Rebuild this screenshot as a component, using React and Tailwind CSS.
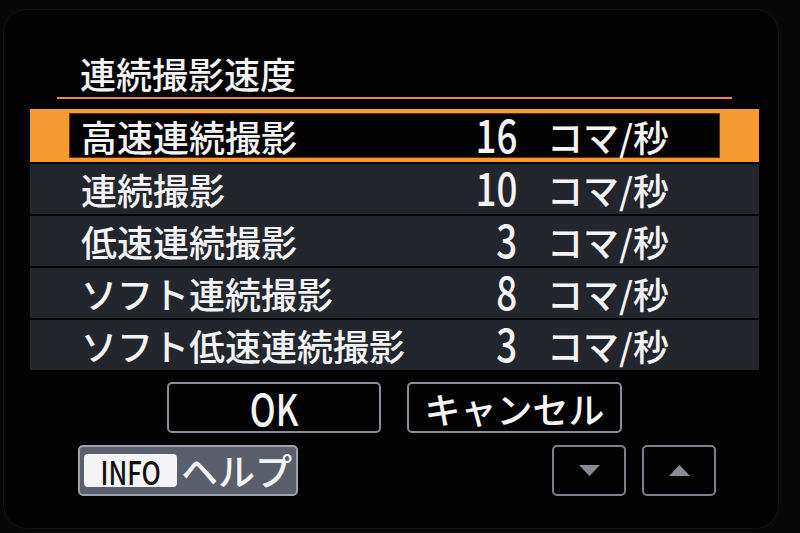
const JP = "font-['Noto_Sans_CJK_JP','Noto_Sans',sans-serif]";

const rows = [
  { label: "高速連続撮影", fps: "16" },
  { label: "連続撮影", fps: "10" },
  { label: "低速連続撮影", fps: "3" },
  { label: "ソフト連続撮影", fps: "8" },
  { label: "ソフト低速連続撮影", fps: "3" },
];

function RowContent({ label, fps, lead }) {
  return (
    <div className="flex items-center h-full text-[#f4f4f6] font-medium">
      <div className={lead} />
      <div className="w-[349px] shrink-0 text-[36px] leading-[36px] whitespace-nowrap">{label}</div>
      <div className="w-[87px] shrink-0 flex justify-end">
        <span className="inline-block text-[46px] leading-[44px] scale-x-[0.8] origin-right -translate-y-[3px]">{fps}</span>
      </div>
      <div className="ml-[30px] text-[36px] leading-[36px] whitespace-nowrap">コマ/秒</div>
    </div>
  );
}

function Triangle({ up }) {
  return (
    <svg width="21" height="11" viewBox="0 0 21 11">
      <path d={up ? "M10.5 0 L21 11 L0 11 Z" : "M0 0 L21 0 L10.5 11 Z"} fill="#878b96" />
    </svg>
  );
}

export default function App() {
  return (
    <div className={`w-[800px] h-[533px] bg-[#070708] overflow-hidden ${JP}`}>
      <div className="ml-[3px] mt-[9px] w-[776px] h-[520px] rounded-[24px] bg-[#030304] border border-[#141417] flex flex-col">
        {/* title */}
        <div className="mt-[45px] pl-[76px] text-[36px] leading-[37px] text-[#f4f4f6] font-medium">連続撮影速度</div>
        <div className="mt-[5px] ml-[53px] w-[675px] h-[2px] bg-[#f0892a]" />

        {/* list */}
        <div className="mt-[10px] ml-[26px] w-[729px] flex flex-col gap-[2px]">
          {rows.map((r, i) =>
            i === 0 ? (
              <div key={i} className="h-[53px] bg-[#f59b31] px-[39px] py-[4px]">
                <div className="h-full bg-[#020202] border border-[#6a2c0c]">
                  <RowContent label={r.label} fps={r.fps} lead="w-[11px] shrink-0" />
                </div>
              </div>
            ) : (
              <div key={i} className="h-[50px] bg-[#24262d]">
                <RowContent label={r.label} fps={r.fps} lead="w-[51px] shrink-0" />
              </div>
            )
          )}
        </div>

        {/* OK / cancel */}
        <div className="mt-[12px] ml-[163px] flex gap-[26px]">
          <div className="w-[214px] h-[51px] rounded-[5px] border-2 border-[#8a8e98] flex items-center justify-center">
            <span className="inline-block text-[44px] leading-[40px] text-[#f4f4f6] font-medium scale-x-[0.78] -translate-y-[1px]">OK</span>
          </div>
          <div className="w-[215px] h-[51px] rounded-[5px] border-2 border-[#8a8e98] flex items-center justify-center text-[36px] leading-[36px] text-[#f4f4f6] font-medium">
            キャンセル
          </div>
        </div>

        {/* help and page arrows */}
        <div className="mt-[12px] ml-[74px] flex items-center">
          <div className="w-[220px] h-[51px] rounded-[5px] border-2 border-[#9ea2ab] bg-[#5b5f6b] flex items-center pl-[4px]">
            <div className="w-[93px] h-[33px] rounded-[4px] bg-[#f4f4f6] flex items-center justify-center">
              <span className="inline-block text-[32px] leading-[30px] text-[#111] font-medium scale-x-[0.8]">INFO</span>
            </div>
            <span className="ml-[4px] text-[37px] leading-[37px] text-[#f4f4f6] font-medium">ヘルプ</span>
          </div>
          <div className="ml-[254px] w-[74px] h-[51px] rounded-[5px] border-2 border-[#7c808a] flex items-center justify-center">
            <Triangle />
          </div>
          <div className="ml-[16px] w-[74px] h-[51px] rounded-[5px] border-2 border-[#7c808a] flex items-center justify-center">
            <Triangle up />
          </div>
        </div>
      </div>
    </div>
  );
}
